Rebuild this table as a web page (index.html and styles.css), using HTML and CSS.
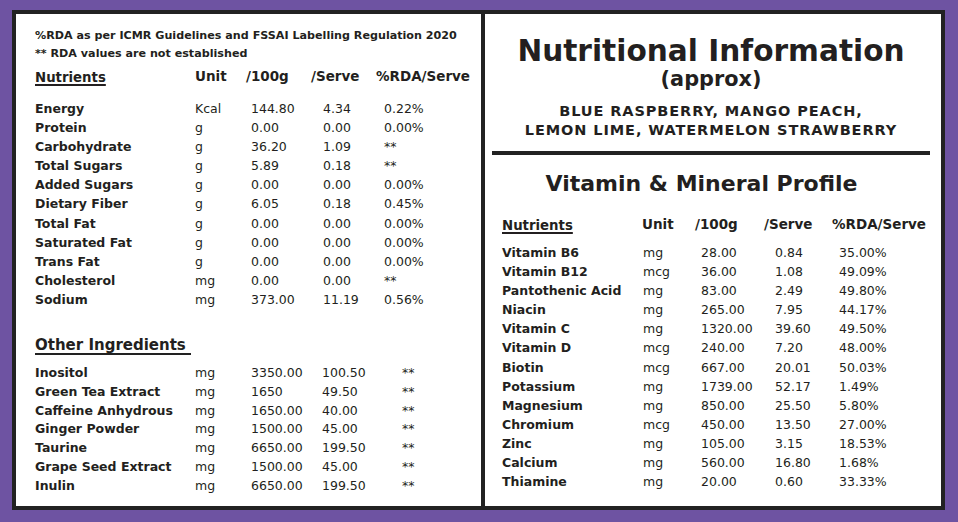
FILE: index.html
```html
<!DOCTYPE html>
<html>
<head>
<meta charset="utf-8">
<link rel="stylesheet" href="styles.css">
</head>
<body>
<div class="label">
  <section class="panel left">
    <p class="note">%RDA as per ICMR Guidelines and FSSAI Labelling Regulation 2020</p>
    <p class="note">** RDA values are not established</p>
    <div class="tbl nutr">
      <div class="row head"><span class="u">Nutrients</span><span>Unit</span><span>/100g</span><span>/Serve</span><span>%RDA/Serve</span></div>
      <div class="row"><span>Energy</span><span>Kcal</span><span>144.80</span><span>4.34</span><span>0.22%</span></div>
      <div class="row"><span>Protein</span><span>g</span><span>0.00</span><span>0.00</span><span>0.00%</span></div>
      <div class="row"><span>Carbohydrate</span><span>g</span><span>36.20</span><span>1.09</span><span>**</span></div>
      <div class="row"><span>Total Sugars</span><span>g</span><span>5.89</span><span>0.18</span><span>**</span></div>
      <div class="row"><span>Added Sugars</span><span>g</span><span>0.00</span><span>0.00</span><span>0.00%</span></div>
      <div class="row"><span>Dietary Fiber</span><span>g</span><span>6.05</span><span>0.18</span><span>0.45%</span></div>
      <div class="row"><span>Total Fat</span><span>g</span><span>0.00</span><span>0.00</span><span>0.00%</span></div>
      <div class="row"><span>Saturated Fat</span><span>g</span><span>0.00</span><span>0.00</span><span>0.00%</span></div>
      <div class="row"><span>Trans Fat</span><span>g</span><span>0.00</span><span>0.00</span><span>0.00%</span></div>
      <div class="row"><span>Cholesterol</span><span>mg</span><span>0.00</span><span>0.00</span><span>**</span></div>
      <div class="row"><span>Sodium</span><span>mg</span><span>373.00</span><span>11.19</span><span>0.56%</span></div>
    </div>
    <h3 class="other">Other Ingredients</h3>
    <div class="tbl oth">
      <div class="row"><span>Inositol</span><span>mg</span><span>3350.00</span><span>100.50</span><span>**</span></div>
      <div class="row"><span>Green Tea Extract</span><span>mg</span><span>1650</span><span>49.50</span><span>**</span></div>
      <div class="row"><span>Caffeine Anhydrous</span><span>mg</span><span>1650.00</span><span>40.00</span><span>**</span></div>
      <div class="row"><span>Ginger Powder</span><span>mg</span><span>1500.00</span><span>45.00</span><span>**</span></div>
      <div class="row"><span>Taurine</span><span>mg</span><span>6650.00</span><span>199.50</span><span>**</span></div>
      <div class="row"><span>Grape Seed Extract</span><span>mg</span><span>1500.00</span><span>45.00</span><span>**</span></div>
      <div class="row"><span>Inulin</span><span>mg</span><span>6650.00</span><span>199.50</span><span>**</span></div>
    </div>
  </section>
  <section class="panel right">
    <h1 class="title">Nutritional Information</h1>
    <div class="approx">(approx)</div>
    <p class="flavors">BLUE RASPBERRY, MANGO PEACH,<br>LEMON LIME, WATERMELON STRAWBERRY</p>
    <div class="rule"></div>
    <h2 class="sub">Vitamin &amp; Mineral Profile</h2>
    <div class="tbl vit">
      <div class="row head"><span class="u">Nutrients</span><span>Unit</span><span>/100g</span><span>/Serve</span><span>%RDA/Serve</span></div>
      <div class="row"><span>Vitamin B6</span><span>mg</span><span>28.00</span><span>0.84</span><span>35.00%</span></div>
      <div class="row"><span>Vitamin B12</span><span>mcg</span><span>36.00</span><span>1.08</span><span>49.09%</span></div>
      <div class="row"><span>Pantothenic Acid</span><span>mg</span><span>83.00</span><span>2.49</span><span>49.80%</span></div>
      <div class="row"><span>Niacin</span><span>mg</span><span>265.00</span><span>7.95</span><span>44.17%</span></div>
      <div class="row"><span>Vitamin C</span><span>mg</span><span>1320.00</span><span>39.60</span><span>49.50%</span></div>
      <div class="row"><span>Vitamin D</span><span>mcg</span><span>240.00</span><span>7.20</span><span>48.00%</span></div>
      <div class="row"><span>Biotin</span><span>mcg</span><span>667.00</span><span>20.01</span><span>50.03%</span></div>
      <div class="row"><span>Potassium</span><span>mg</span><span>1739.00</span><span>52.17</span><span>1.49%</span></div>
      <div class="row"><span>Magnesium</span><span>mg</span><span>850.00</span><span>25.50</span><span>5.80%</span></div>
      <div class="row"><span>Chromium</span><span>mcg</span><span>450.00</span><span>13.50</span><span>27.00%</span></div>
      <div class="row"><span>Zinc</span><span>mg</span><span>105.00</span><span>3.15</span><span>18.53%</span></div>
      <div class="row"><span>Calcium</span><span>mg</span><span>560.00</span><span>16.80</span><span>1.68%</span></div>
      <div class="row"><span>Thiamine</span><span>mg</span><span>20.00</span><span>0.60</span><span>33.33%</span></div>
    </div>
  </section>
</div>
</body>
</html>
```

FILE: styles.css
```css
html, body {
  margin: 0;
  padding: 0;
}
body {
  width: 958px;
  height: 522px;
  overflow: hidden;
  background: #6e53a2;
  font-family: "DejaVu Sans", sans-serif;
  color: #231f20;
}
.label {
  margin: 10px 0 0 12px;
  width: 933px;
  height: 500px;
  box-sizing: border-box;
  border: 4px solid #222;
  background: #fff;
  display: flex;
}
.panel {
  box-sizing: border-box;
  height: 100%;
}
.left {
  width: 469px;
  border-right: 4px solid #222;
  padding: 13px 0 0 19px;
}
.right {
  flex: 1;
  padding: 21px 11px 0 7px;
}
.note {
  margin: 0;
  font-size: 11.15px;
  font-weight: bold;
  line-height: 18px;
  white-space: nowrap;
}
.row {
  display: grid;
  font-size: 12.5px;
  line-height: 19.1px;
  white-space: nowrap;
}
.row span:first-child {
  font-weight: bold;
}
.row.head {
  font-size: 13.5px;
  font-weight: bold;
  line-height: 20px;
}
.row.head .u {
  font-size: 13.3px;
  padding-top: 2px;
  text-decoration: underline;
  text-decoration-thickness: 1.5px;
  text-underline-offset: 2px;
}
.nutr .row {
  grid-template-columns: 160px 56px 72px 61px auto;
}
.nutr .row.head {
  grid-template-columns: 160px 51px 65px 65px auto;
  margin: 3px 0 11px;
}
.other {
  display: inline-block;
  margin: 28px 0 9px;
  padding-right: 5px;
  font-size: 15px;
  line-height: 16px;
  font-weight: bold;
  border-bottom: 2.5px solid #222;
}
.oth .row {
  grid-template-columns: 160px 56px 71px 80px auto;
  line-height: 18.8px;
}
.title {
  margin: 0;
  text-align: center;
  font-size: 29.6px;
  line-height: 32px;
  font-weight: bold;
}
.approx {
  text-align: center;
  font-size: 20.8px;
  line-height: 24px;
  font-weight: bold;
}
.flavors {
  margin: 11px 0 0;
  text-align: center;
  font-size: 14.5px;
  line-height: 19px;
  letter-spacing: 0.9px;
  font-weight: bold;
}
.rule {
  margin-top: 11px;
  height: 4px;
  background: #222;
}
.sub {
  margin: 16px 19px 0 0;
  text-align: center;
  font-size: 22px;
  line-height: 26px;
  font-weight: bold;
}
.vit {
  margin: 17px 0 0 10px;
}
.vit .row {
  grid-template-columns: 141px 58px 74px 64px auto;
}
.vit .row.head {
  grid-template-columns: 140px 53px 69px 68px auto;
  margin-bottom: 7px;
}
```
